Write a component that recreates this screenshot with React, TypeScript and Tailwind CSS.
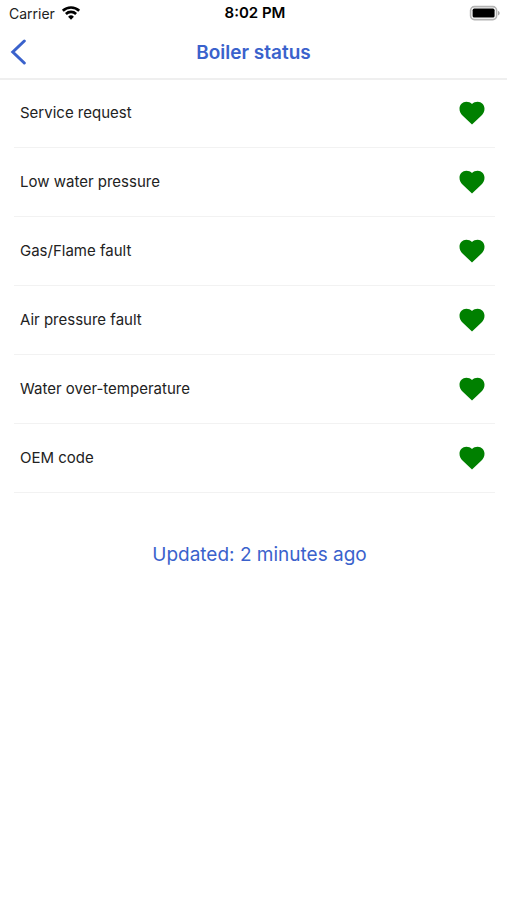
interface StatusItem {
  label: string;
  ok: boolean;
}

const items: StatusItem[] = [
  { label: "Service request", ok: true },
  { label: "Low water pressure", ok: true },
  { label: "Gas/Flame fault", ok: true },
  { label: "Air pressure fault", ok: true },
  { label: "Water over-temperature", ok: true },
  { label: "OEM code", ok: true },
];

function WifiIcon() {
  return (
    <svg className="w-5 h-4" viewBox="0 0 20 16" fill="none" stroke="currentColor" strokeWidth="2.6">
      <path d="M1.8 5.8a11.8 11.8 0 0 1 16.4 0" />
      <path d="M4.9 9a7.3 7.3 0 0 1 10.2 0" />
      <path d="M10 14.7l-2.9-3a4.2 4.2 0 0 1 5.8 0z" fill="currentColor" stroke="none" />
    </svg>
  );
}

function BatteryIcon() {
  return (
    <svg className="w-8 h-4" viewBox="0 0 32 16">
      <rect x="1.6" y="1.6" width="26" height="13" rx="3.8" fill="none" stroke="#b4b4b4" strokeWidth="1.6" />
      <rect x="3.6" y="3.6" width="22" height="9" rx="1.6" fill="#000" />
      <path d="M29 6v4.4c1-.4 1.7-1.2 1.7-2.2S30 6.4 29 6z" fill="#a8a8a8" />
    </svg>
  );
}

function HeartIcon({ ok }: { ok: boolean }) {
  return (
    <svg
      className={`w-[30px] h-[30px] ${ok ? "text-[#008000]" : "text-red-600"}`}
      viewBox="0 0 24 24"
      fill="currentColor"
      role="img"
      aria-label={ok ? "OK" : "Fault"}
    >
      <path d="M12 21.2L4.600 14.200C2.900 12.500 2 10.700 2 8.600 2 5.400 4.400 3 7.500 3c1.700 0 3.400.6 4.500 1.700C13.100 3.600 14.800 3 16.500 3 19.600 3 22 5.400 22 8.600c0 2.100-.9 3.900-2.600 5.600L12 21.200z" />
    </svg>
  );
}

function StatusBar() {
  return (
    <div className="grid grid-cols-3 items-center h-[26px] pl-[9px] pr-1.5 text-[14px] text-black">
      <div className="flex items-center gap-1.5">
        <span className="text-[#222]">Carrier</span>
        <WifiIcon />
      </div>
      <span className="text-center text-[15px] font-semibold">8:02 PM</span>
      <div className="flex justify-end">
        <BatteryIcon />
      </div>
    </div>
  );
}

export default function App() {
  return (
    <div className="min-h-screen bg-white font-['Inter','Liberation_Sans',sans-serif]">
      <StatusBar />
      <header className="grid grid-cols-[40px_1fr_40px] items-center h-[54px] border-b-2 border-[#efefef] text-[#3a62cc]">
        <button type="button" aria-label="Back" className="flex items-center pl-2.5 h-full">
          <svg
            className="w-4 h-[26px]"
            viewBox="0 0 16 26"
            fill="none"
            stroke="currentColor"
            strokeWidth="3"
            strokeLinecap="round"
          >
            <path d="M14.3 2L2.800 13l11.500 11" />
          </svg>
        </button>
        <h1 className="pt-0.5 text-center text-[19px] font-semibold">Boiler status</h1>
      </header>

      <main>
        <ul className="-mt-px pl-3.5 pr-3">
          {items.map((item) => (
            <li
              key={item.label}
              className="flex items-center justify-between h-[69px] pl-1.5 pr-2 border-b border-[#f2f2f2]"
            >
              <span className="text-[15px] text-[#222]">{item.label}</span>
              <HeartIcon ok={item.ok} />
            </li>
          ))}
        </ul>
        <p className="mt-12 pl-3 text-center text-[19px] leading-7 text-[#3a62cc]">
          Updated: 2 minutes ago
        </p>
      </main>
    </div>
  );
}
